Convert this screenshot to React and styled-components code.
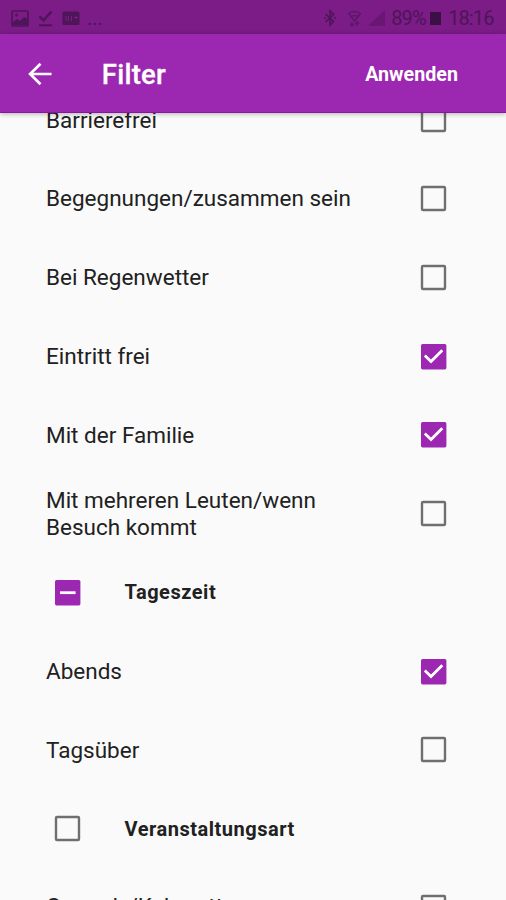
import React from "react";
import styled, { createGlobalStyle } from "styled-components";

const GlobalStyle = createGlobalStyle`
  * { box-sizing: border-box; }
  html, body { margin: 0; padding: 0; }
  body { background: #fafafa; font-family: Roboto, "Noto Sans", sans-serif; }
`;

const Screen = styled.div`
  width: 506px;
  height: 900px;
  display: flex;
  flex-direction: column;
  overflow: hidden;
  background: #fafafa;
  color: #212121;
`;

const StatusBar = styled.div`
  height: 34px;
  flex: none;
  display: flex;
  align-items: center;
  justify-content: space-between;
  padding: 2px 12.5px 0 11px;
  background: #7b1c87;
  color: #4e1558;
`;

const StatusGroup = styled.div`
  display: flex;
  align-items: center;
`;

const StatusIcon = styled.svg`
  display: block;
  flex: none;
  margin-right: ${(p) => p.$gap || 0}px;
`;

const StatusText = styled.span`
  font-size: 20px;
  line-height: 24px;
  letter-spacing: ${(p) => p.$spacing || 0}px;
  margin-right: ${(p) => p.$gap || 0}px;
`;

const AppBar = styled.header`
  height: 79px;
  flex: none;
  display: flex;
  align-items: center;
  padding: 1px 48px 0 23.5px;
  background: #9c27b0;
  color: #fff;
  border-bottom: 1px solid #8c159f;
  box-shadow: 0 1px 5px rgba(0, 0, 0, 0.3);
  z-index: 1;
`;

const BackButton = styled.button`
  width: 32px;
  height: 32px;
  padding: 0;
  border: 0;
  background: none;
  color: inherit;
  svg { display: block; }
`;

const Title = styled.h1`
  margin: 2px 0 0 46.3px;
  flex: 1;
  font-size: 27.5px;
  line-height: 32px;
  font-weight: 500;
  letter-spacing: 0.25px;
  -webkit-text-stroke: 0.3px currentColor;
`;

const ApplyButton = styled.button`
  padding: 0;
  margin-top: 2px;
  border: 0;
  background: none;
  color: inherit;
  font: 700 19.7px/24px Roboto, sans-serif;
`;

const List = styled.main`
  flex: 1;
  min-height: 0;
  overflow: hidden;
`;

const Rows = styled.div`
  margin-top: -32.5px;
`;

const Row = styled.div`
  height: 78.75px;
  display: flex;
  align-items: center;
  justify-content: space-between;
  padding: 0 59px 0 46px;
`;

const Label = styled.span`
  width: 320px;
  margin-bottom: ${(p) => p.$lift || 0}px;
  font-size: 22.5px;
  line-height: 26.4px;
  white-space: pre-line;
`;

const GroupRow = styled(Row)`
  justify-content: flex-start;
  padding-left: 54px;
`;

const GroupLabel = styled.span`
  margin: 0 0 0 43.5px;
  font-size: 20px;
  line-height: 26px;
  font-weight: 700;
  letter-spacing: 0.52px;
`;

const Box = styled.svg`
  display: block;
  flex: none;
`;

function Checkbox({ state }) {
  return (
    <Box width="27" height="27" viewBox="0 0 27 27" fill="none">
      {state === "off" ? (
        <rect x="2" y="2" width="23" height="23" rx="1" stroke="#6f6f6f" strokeWidth="2.4" />
      ) : (
        <rect x="1" y="1" width="25.4" height="25.4" rx="1.6" fill="#9c27b0" />
      )}
      {state === "on" && <path d="M4.8 12.6 11 18.5 22.3 7.3" stroke="#fff" strokeWidth="2.8" />}
      {state === "mixed" && <path d="M6 13.7h15.6" stroke="#fff" strokeWidth="2.8" />}
    </Box>
  );
}

const items = [
  { label: "Barrierefrei", state: "off" },
  { label: "Begegnungen/zusammen sein", state: "off" },
  { label: "Bei Regenwetter", state: "off" },
  { label: "Eintritt frei", state: "on" },
  { label: "Mit der Familie", state: "on" },
  { label: "Mit mehreren Leuten/wenn\nBesuch kommt", state: "off" },
  { label: "Tageszeit", state: "mixed", group: true },
  { label: "Abends", state: "on" },
  { label: "Tagsüber", state: "off" },
  { label: "Veranstaltungsart", state: "off", group: true },
  { label: "Comedy/Kabarett", state: "off", lift: 2 },
];

export default function App() {
  return (
    <>
      <GlobalStyle />
      <Screen>
        <StatusBar>
          <StatusGroup>
            <StatusIcon width="18" height="17" viewBox="0 0 18 17" $gap={9}>
              <rect x="1" y="1" width="16" height="15" rx="1" fill="none" stroke="currentColor" strokeWidth="1.6" />
              <path d="M2 15v-3l4-3 3 2 4-4 4 2v6z" fill="currentColor" />
              <circle cx="5.5" cy="5" r="1.4" fill="currentColor" />
            </StatusIcon>
            <StatusIcon width="16" height="17" viewBox="0 0 16 17" fill="none" stroke="currentColor" $gap={8}>
              <path d="m1.5 6.3 4 4L13.5 1.5" strokeWidth="2.5" />
              <path d="M1 15.3h13" strokeWidth="2" />
            </StatusIcon>
            <StatusIcon width="18" height="15" viewBox="0 0 18 15" $gap={7}>
              <rect x="0.5" y="0.5" width="17" height="13.5" rx="1.5" fill="currentColor" />
              <path d="M4 5v5M6.5 5v5M9.5 5v5M14 5v3M12 6.5h4" fill="none" stroke="#7b1c87" strokeWidth="1.1" />
            </StatusIcon>
            <StatusText>...</StatusText>
          </StatusGroup>
          <StatusGroup>
            <StatusIcon width="14" height="18" viewBox="0 0 14 18" fill="none" stroke="currentColor" strokeWidth="1.7" $gap={10}>
              <path d="m2.5 5 8 7.5L7 16V2l3.5 3.5-8 7.5" />
              <path d="M1 9h2M11 9h2" />
            </StatusIcon>
            <StatusIcon width="15" height="17" viewBox="0 0 15 17" fill="none" stroke="#5e1769" strokeWidth="1.5" $gap={6}>
              <path d="M1 4Q7.5-1 14 4M3.5 7q4-3.2 8 0" />
              <path d="m2 4 5.5 7L13 4M5 12v4M3 14l2 2 2-2M10 16v-4M8 14l2-2 2 2" />
            </StatusIcon>
            <StatusIcon width="17" height="16" viewBox="0 0 17 16" $gap={6}>
              <path d="M0 16 17 0v16z" fill="#681873" />
            </StatusIcon>
            <StatusText $gap={4.5} $spacing={-0.9}>89%</StatusText>
            <StatusIcon width="11" height="14" viewBox="0 0 11 14" $gap={7}>
              <path d="M0 1h11v13H0z" fill="#3a1045" />
            </StatusIcon>
            <StatusText $spacing={-0.9}>18:16</StatusText>
          </StatusGroup>
        </StatusBar>
        <AppBar>
          <BackButton aria-label="Zurück">
            <svg width="32" height="32" viewBox="0 0 32 32" fill="none" stroke="currentColor" strokeWidth="2.7">
              <path d="M27.5 16H6M16.5 5.8 6.1 16l10.4 10.2" />
            </svg>
          </BackButton>
          <Title>Filter</Title>
          <ApplyButton>Anwenden</ApplyButton>
        </AppBar>
        <List>
          <Rows>
            {items.map((item) =>
              item.group ? (
                <GroupRow key={item.label}>
                  <Checkbox state={item.state} />
                  <GroupLabel>{item.label}</GroupLabel>
                </GroupRow>
              ) : (
                <Row key={item.label}>
                  <Label $lift={item.lift}>{item.label}</Label>
                  <Checkbox state={item.state} />
                </Row>
              )
            )}
          </Rows>
        </List>
      </Screen>
    </>
  );
}
